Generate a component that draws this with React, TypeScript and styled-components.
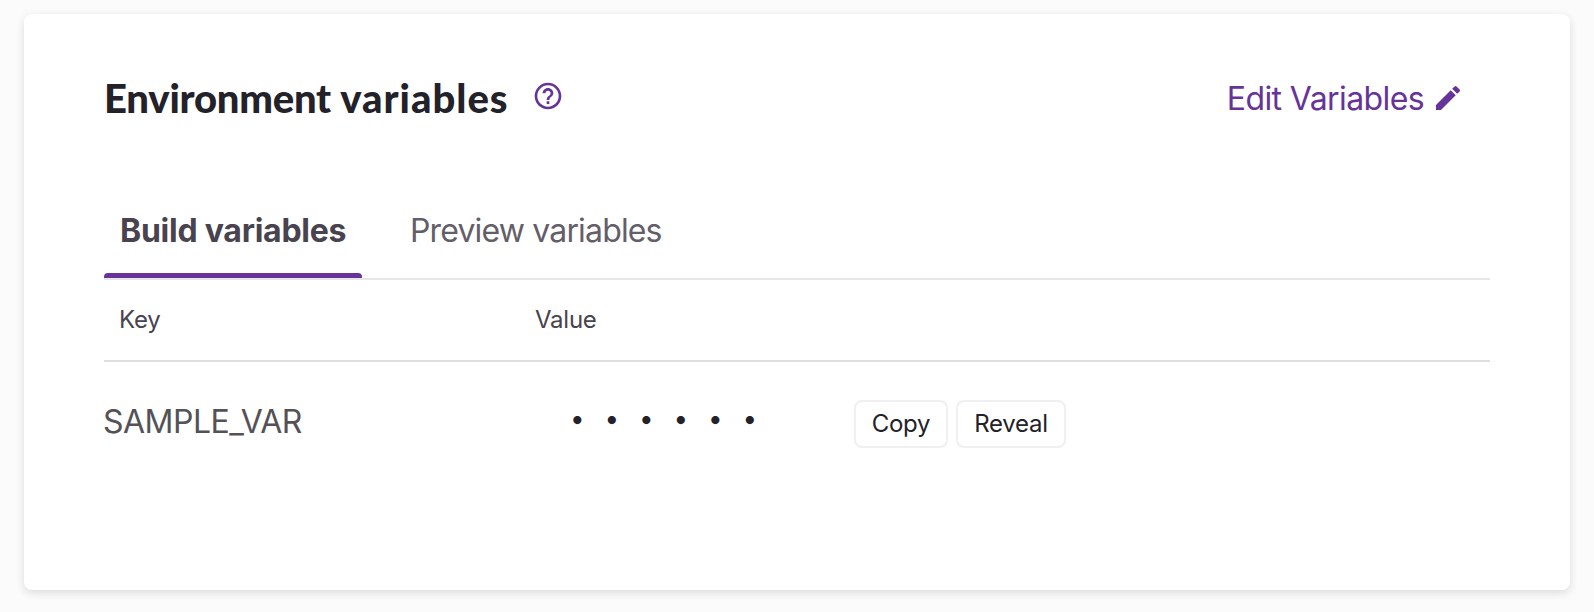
import React from "react";
import styled, { createGlobalStyle } from "styled-components";

const GlobalStyle = createGlobalStyle`
  * { box-sizing: border-box; }
  body {
    margin: 0;
    background: #fbfbfb;
    font-family: Inter, "Liberation Sans", sans-serif;
    -webkit-font-smoothing: antialiased;
  }
`;

const Page = styled.main`
  height: 612px;
  padding: 14px 24px 22px;
  overflow: hidden;
`;

const Card = styled.section`
  height: 576px;
  padding: 60px 80px;
  background: #fff;
  border-radius: 8px;
  box-shadow: 0 2px 8px rgba(46, 41, 51, 0.08), 0 4px 8px rgba(71, 63, 79, 0.08);
`;

const Header = styled.header`
  display: flex;
  align-items: center;
  justify-content: space-between;
  height: 48px;
  padding-right: 26px;
`;

const TitleGroup = styled.div`
  display: flex;
  align-items: center;
`;

const Title = styled.h2`
  width: 428px;
  margin: 0;
  color: #232129;
  font-family: Lato, "Liberation Sans", sans-serif;
  font-size: 40px;
  font-weight: 900;
  line-height: 48px;
  letter-spacing: -0.24px;
  white-space: nowrap;
`;

const TitleWord = styled.span`
  letter-spacing: 1px;
`;

const HelpIcon = styled.svg`
  width: 32px;
  height: 32px;
  margin-bottom: 4px;
  fill: #663399;
`;

const EditLink = styled.a`
  display: flex;
  align-items: center;
  gap: 8px;
  color: #663399;
  font-size: 32px;
  line-height: 48px;
  letter-spacing: -0.6px;
  white-space: nowrap;
`;

const EditLabel = styled.span`
  padding-top: 2px;
  line-height: 48px;
`;

const EditIcon = styled.svg`
  width: 32px;
  height: 32px;
  fill: currentColor;
`;

const TabList = styled.nav`
  display: flex;
  gap: 32px;
  height: 80px;
  margin-top: 78px;
  border-bottom: 2px solid #e6e6e8;
`;

const Tab = styled.button<{ $active?: boolean; $width: number; $tracking: number }>`
  display: flex;
  flex-direction: column;
  width: ${(p) => p.$width}px;
  height: 78px;
  padding: 0 0 0 16px;
  border: 0;
  background: none;
  color: ${(p) => (p.$active ? "#48434f" : "#635e69")};
  font: ${(p) => (p.$active ? 700 : 400)} 32px/62px Inter, sans-serif;
  letter-spacing: ${(p) => p.$tracking}px;
  text-align: left;
  white-space: nowrap;

  &::after {
    content: "";
    width: ${(p) => p.$width}px;
    height: 5px;
    margin: 11px 0 0 -16px;
    border-radius: 4px 4px 0 0;
    background: ${(p) => (p.$active ? "#663399" : "transparent")};
  }
`;

const TableHead = styled.div`
  display: grid;
  grid-template-columns: 416px 1fr;
  height: 82px;
  padding: 0 15px;
  border-bottom: 2px solid #dededf;
  color: #48434f;
  font-size: 24px;
  line-height: 80px;
  letter-spacing: -0.25px;
`;

const Row = styled.div`
  display: flex;
  align-items: flex-start;
  padding-top: 38px;
`;

const VariableName = styled.span`
  width: 467px;
  margin-left: -1px;
  color: #545257;
  font-size: 32px;
  line-height: 43px;
  letter-spacing: -0.5px;
`;

const Mask = styled.span`
  width: 284px;
  color: #232129;
  font-size: 26px;
  line-height: 37px;
  letter-spacing: 19.9px;
  white-space: nowrap;
`;

const Actions = styled.div`
  display: flex;
  gap: 8px;
`;

const ActionButton = styled.button<{ $width: number }>`
  width: ${(p) => p.$width}px;
  height: 48px;
  padding: 0;
  border: 2px solid #f0f0f2;
  border-radius: 8px;
  background: #fff;
  color: #232129;
  font: 400 24px/44px Inter, sans-serif;
  letter-spacing: -0.3px;
`;

export default function App() {
  return (
    <>
      <GlobalStyle />
      <Page>
        <Card>
          <Header>
            <TitleGroup>
              <Title>
                Environment <TitleWord>variables</TitleWord>
              </Title>
              <HelpIcon viewBox="0 0 24 24" aria-label="Help">
                <path d="M11 18h2v-2h-2v2zm1-16C6.48 2 2 6.48 2 12s4.48 10 10 10 10-4.48 10-10S17.52 2 12 2zm0 18c-4.41 0-8-3.59-8-8s3.59-8 8-8 8 3.59 8 8-3.59 8-8 8zm0-14c-2.21 0-4 1.79-4 4h2c0-1.1.9-2 2-2s2 .9 2 2c0 2-3 1.75-3 5h2c0-2.25 3-2.5 3-5 0-2.21-1.79-4-4-4z" />
              </HelpIcon>
            </TitleGroup>
            <EditLink>
              <EditLabel>Edit Variables</EditLabel>
              <EditIcon viewBox="0 0 24 24" aria-hidden="true">
                <path d="M3 17.25V21h3.75L17.81 9.94l-3.75-3.75L3 17.25zM20.71 7.04a.996.996 0 0 0 0-1.41l-2.34-2.34a.996.996 0 0 0-1.41 0l-1.83 1.83 3.75 3.75 1.83-1.83z" />
              </EditIcon>
            </EditLink>
          </Header>
          <TabList>
            <Tab $active $width={258} $tracking={-0.25}>Build variables</Tab>
            <Tab $width={284} $tracking={-0.84}>Preview variables</Tab>
          </TabList>
          <TableHead>
            <span>Key</span>
            <span>Value</span>
          </TableHead>
          <Row>
            <VariableName>SAMPLE_VAR</VariableName>
            <Mask>••••••</Mask>
            <Actions>
              <ActionButton $width={94}>Copy</ActionButton>
              <ActionButton $width={110}>Reveal</ActionButton>
            </Actions>
          </Row>
        </Card>
      </Page>
    </>
  );
}
